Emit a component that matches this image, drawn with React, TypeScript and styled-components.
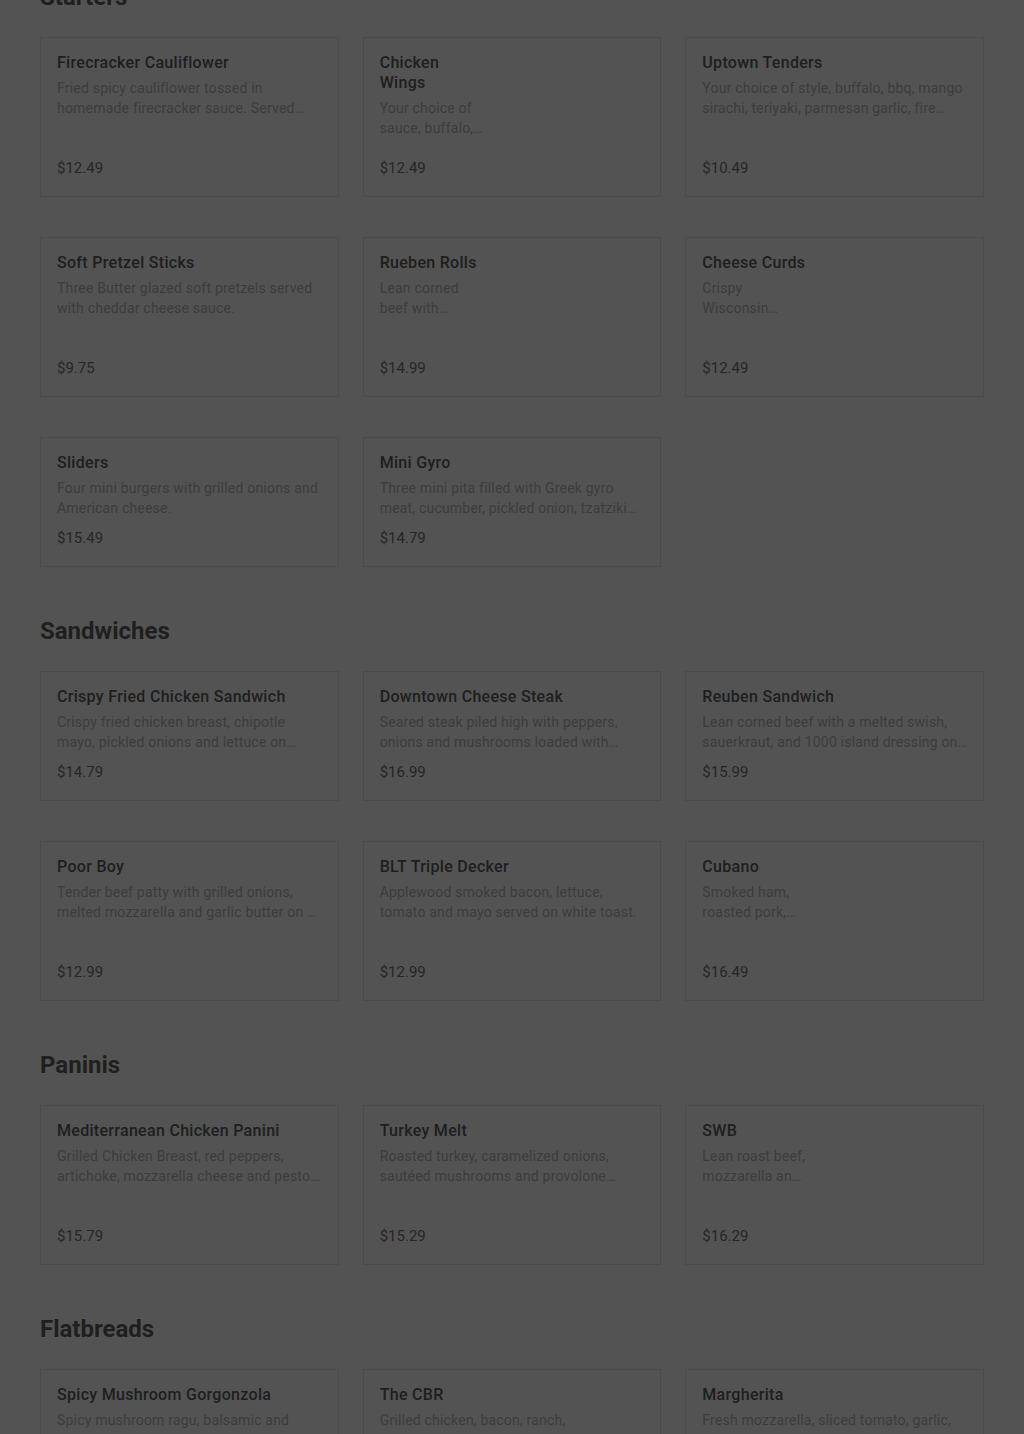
import React from "react";
import styled, { createGlobalStyle } from "styled-components";

const GlobalStyle = createGlobalStyle`
  html, body {
    margin: 0;
    padding: 0;
    background: #535353;
    overflow: hidden;
  }
  body {
    font-family: Roboto, "Liberation Sans", Arial, sans-serif;
    -webkit-font-smoothing: antialiased;
  }
`;

type Item = {
  name: string;
  desc: string;
  price: string;
  image?: boolean;
};

type Section = {
  title: string;
  items: Item[];
};

const menu: Section[] = [
  {
    title: "Starters",
    items: [
      {
        name: "Firecracker Cauliflower",
        desc: "Fried spicy cauliflower tossed in homemade firecracker sauce. Served with ranch dressing.",
        price: "$12.49",
      },
      {
        name: "Chicken Wings",
        desc: "Your choice of sauce, buffalo, bbq, mango sirachi, teriyaki.",
        price: "$12.49",
        image: true,
      },
      {
        name: "Uptown Tenders",
        desc: "Your choice of style, buffalo, bbq, mango sirachi, teriyaki, parmesan garlic, fire roasted.",
        price: "$10.49",
      },
      {
        name: "Soft Pretzel Sticks",
        desc: "Three Butter glazed soft pretzels served with cheddar cheese sauce.",
        price: "$9.75",
      },
      {
        name: "Rueben Rolls",
        desc: "Lean corned beef with sauerkraut, swiss and thousand island.",
        price: "$14.99",
        image: true,
      },
      {
        name: "Cheese Curds",
        desc: "Crispy Wisconsin cheese curds.",
        price: "$12.49",
        image: true,
      },
      {
        name: "Sliders",
        desc: "Four mini burgers with grilled onions and American cheese.",
        price: "$15.49",
      },
      {
        name: "Mini Gyro",
        desc: "Three mini pita filled with Greek gyro meat, cucumber, pickled onion, tzatziki sauce.",
        price: "$14.79",
      },
    ],
  },
  {
    title: "Sandwiches",
    items: [
      {
        name: "Crispy Fried Chicken Sandwich",
        desc: "Crispy fried chicken breast, chipotle mayo, pickled onions and lettuce on toasted brioche.",
        price: "$14.79",
      },
      {
        name: "Downtown Cheese Steak",
        desc: "Seared steak piled high with peppers, onions and mushrooms loaded with cheese.",
        price: "$16.99",
      },
      {
        name: "Reuben Sandwich",
        desc: "Lean corned beef with a melted swish, sauerkraut, and 1000 island dressing on rye.",
        price: "$15.99",
      },
      {
        name: "Poor Boy",
        desc: "Tender beef patty with grilled onions, melted mozzarella and garlic butter on a hoagie.",
        price: "$12.99",
      },
      {
        name: "BLT Triple Decker",
        desc: "Applewood smoked bacon, lettuce, tomato and mayo served on white toast.",
        price: "$12.99",
      },
      {
        name: "Cubano",
        desc: "Smoked ham, roasted pork, swiss and pickles.",
        price: "$16.49",
        image: true,
      },
    ],
  },
  {
    title: "Paninis",
    items: [
      {
        name: "Mediterranean Chicken Panini",
        desc: "Grilled Chicken Breast, red peppers, artichoke, mozzarella cheese and pesto on ciabatta.",
        price: "$15.79",
      },
      {
        name: "Turkey Melt",
        desc: "Roasted turkey, caramelized onions, sautéed mushrooms and provolone cheese.",
        price: "$15.29",
      },
      {
        name: "SWB",
        desc: "Lean roast beef, mozzarella and horseradish.",
        price: "$16.29",
        image: true,
      },
    ],
  },
  {
    title: "Flatbreads",
    items: [
      {
        name: "Spicy Mushroom Gorgonzola",
        desc: "Spicy mushroom ragu, balsamic and gorgonzola cheese.",
        price: "$14.49",
      },
      {
        name: "The CBR",
        desc: "Grilled chicken, bacon, ranch, caramelized onions and cheddar.",
        price: "$14.99",
      },
      {
        name: "Margherita",
        desc: "Fresh mozzarella, sliced tomato, garlic, basil and olive oil.",
        price: "$13.49",
      },
    ],
  },
];

const Page = styled.main`
  margin-top: -19px;
  padding: 0 40px 40px;
`;

const MenuSection = styled.section`
  & + & {
    margin-top: 48px;
  }
`;

const SectionTitle = styled.h2`
  margin: 0 0 24px;
  font-size: 24px;
  line-height: 32px;
  font-weight: 700;
  color: #1f1f1f;
`;

const Grid = styled.div`
  display: grid;
  grid-template-columns: repeat(3, 1fr);
  column-gap: 24px;
  row-gap: 40px;
`;

const Card = styled.article`
  display: flex;
  gap: 16px;
  min-height: 128px;
  box-sizing: border-box;
  padding: 15px 16px 16px;
  border: 1px solid #4b4b4b;
`;

const Info = styled.div`
  flex: 1;
  min-width: 0;
  display: flex;
  flex-direction: column;
`;

const Name = styled.h3`
  margin: 0;
  font-size: 16px;
  line-height: 20px;
  font-weight: 500;
  letter-spacing: 0.3px;
  color: #1e1e1e;
`;

const Desc = styled.p`
  margin: 5px 0 0;
  font-size: 14px;
  line-height: 20px;
  letter-spacing: 0.2px;
  color: #3c3c3c;
  display: -webkit-box;
  -webkit-line-clamp: 2;
  -webkit-box-orient: vertical;
  overflow: hidden;
`;

const Price = styled.div`
  margin-top: auto;
  padding-top: 8px;
  font-size: 15px;
  line-height: 24px;
  color: #262626;
`;

const Thumb = styled.div`
  flex: 0 0 144px;
  height: 127px;
`;

function MenuCard({ item }: { item: Item }) {
  return (
    <Card>
      <Info>
        <Name>{item.name}</Name>
        <Desc>{item.desc}</Desc>
        <Price>{item.price}</Price>
      </Info>
      {item.image && <Thumb aria-hidden="true" />}
    </Card>
  );
}

export default function App() {
  return (
    <>
      <GlobalStyle />
      <Page>
        {menu.map((section) => (
          <MenuSection key={section.title}>
            <SectionTitle>{section.title}</SectionTitle>
            <Grid>
              {section.items.map((item) => (
                <MenuCard key={item.name} item={item} />
              ))}
            </Grid>
          </MenuSection>
        ))}
      </Page>
    </>
  );
}
